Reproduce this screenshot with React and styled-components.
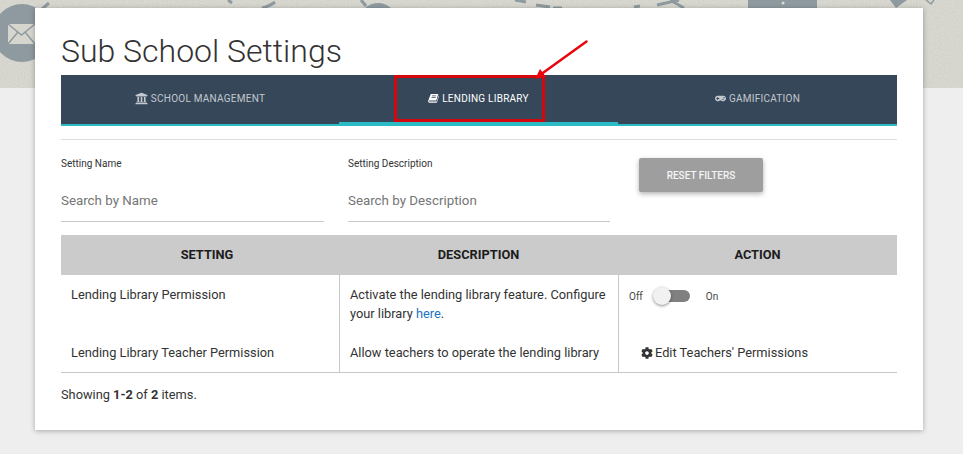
import React from "react";
import styled, { createGlobalStyle } from "styled-components";
import { FaUniversity, FaGamepad, FaCog } from "react-icons/fa";

const GlobalStyle = createGlobalStyle`
  html, body {
    margin: 0;
    padding: 0;
    background: #eeeeee;
    font-family: Roboto, "Liberation Sans", sans-serif;
    color: #333;
  }
  * { box-sizing: border-box; }
`;

const Page = styled.div`
  width: 963px;
  height: 454px;
  overflow: hidden;
`;

const Banner = styled.div`
  height: 88px;
  background: #dbdbd4;
  overflow: hidden;
  svg { display: block; }
`;

const Card = styled.main`
  position: relative;
  width: 888px;
  height: 422px;
  margin: -80px 0 0 35px;
  padding: 27px 26px 0;
  background: #fff;
  box-shadow: 0 1px 5px rgba(0, 0, 0, 0.3);
`;

const Title = styled.h1`
  margin: 0;
  height: 40px;
  font-size: 32px;
  line-height: 32px;
  font-weight: 300;
  color: #333;
`;

const Tabs = styled.nav`
  display: grid;
  grid-template-columns: 278px 279px 279px;
  height: 51px;
  background: #364759;
  border-bottom: 2px solid #2bbbc5;
`;

const Tab = styled.a`
  display: flex;
  align-items: center;
  justify-content: center;
  gap: 3px;
  height: 49px;
  padding-bottom: ${(p) => (p.$active ? "1px" : "3px")};
  font-size: 10px;
  font-weight: 400;
  letter-spacing: 0.25px;
  color: ${(p) => (p.$active ? "#fff" : "#c3c9cf")};
  border-bottom: ${(p) => (p.$active ? "2px solid #2bbbc5" : "0")};
  svg { font-size: ${(p) => p.$iconSize || 11}px; }
`;

const Divider = styled.hr`
  margin: 13px 0 0;
  border: 0;
  border-top: 1px solid #ddd;
`;

const Filters = styled.form`
  display: flex;
  height: 95px;
  padding-top: 18px;
`;

const Field = styled.label`
  display: block;
  width: ${(p) => p.$width}px;
  margin-right: ${(p) => p.$gap}px;
  height: 64px;
  border-bottom: 1px solid #c8c8c8;
`;

const FieldLabel = styled.span`
  display: block;
  font-size: 10px;
  line-height: 12px;
  color: #333;
`;

const FieldInput = styled.input`
  display: block;
  width: 100%;
  margin-top: 21px;
  padding: 0;
  border: 0;
  outline: 0;
  font: 400 13.33px/20px Roboto, sans-serif;
  color: #333;
  &::placeholder { color: #757575; opacity: 1; }
`;

const ResetButton = styled.button`
  width: 124px;
  height: 34px;
  margin-top: 0;
  border: 0;
  border-radius: 2px;
  background: #9e9e9e;
  color: #f5f5f5;
  font: 500 10px Roboto, sans-serif;
  box-shadow: 0 2px 5px rgba(0, 0, 0, 0.3);
`;

const Table = styled.div`
  display: grid;
  grid-template-columns: 278px 279px 279px;
  border-bottom: 1px solid #c8c8c8;
`;

const HeadCell = styled.div`
  height: 40px;
  display: flex;
  align-items: center;
  justify-content: center;
  padding-left: ${(p) => (p.$first ? "14px" : "0")};
  padding-bottom: 1px;
  background: #cbcbcb;
  font-size: 12.8px;
  font-weight: 700;
  color: #1c1c1c;
`;

const Cell = styled.div`
  padding: 10px 8px 10px 10px;
  font-size: 12.8px;
  line-height: 19px;
  color: #333;
  border-left: ${(p) => (p.$first ? "0" : "1px solid #c8c8c8")};
`;

const DocLink = styled.a`
  color: #1a73c7;
`;

const ToggleRow = styled.div`
  display: flex;
  align-items: center;
  height: 21px;
  padding-top: 1px;
  font-size: 10px;
  color: #444;
`;

const Track = styled.span`
  position: relative;
  display: block;
  width: 36px;
  height: 12px;
  margin: -1px 16px 0 11px;
  border-radius: 6px;
  background: #808080;
`;

const Thumb = styled.span`
  position: absolute;
  left: -1px;
  top: -3px;
  width: 18px;
  height: 18px;
  border-radius: 50%;
  background: #f1f1f1;
  box-shadow: 0 1px 3px rgba(0, 0, 0, 0.45);
`;

const EditAction = styled.a`
  display: flex;
  align-items: center;
  gap: 2px;
  padding-left: 12px;
  color: #333;
  svg { font-size: 12px; }
`;

const Summary = styled.p`
  margin: 13px 0 0;
  font-size: 12.8px;
  line-height: 18px;
  color: #333;
`;

const Callout = styled.div`
  position: absolute;
  left: 359px;
  top: 67px;
  width: 151px;
  height: 47px;
  border: 3px solid #d5060c;
`;

const Arrow = styled.svg`
  position: absolute;
  left: 495px;
  top: 30px;
`;

function BookIcon() {
  return (
    <svg width="11" height="10" viewBox="0 0 16 14" fill="currentColor">
      <path
        fillRule="evenodd"
        d="M4 1h11l-3 9.5H2.5c-.8 0-1.2.8-.9 1.2.2.3.6.5 1 .5h10.100l2.800-9 .5.8-2.900 9.300c-.1.4-.5.7-1 .7H2.500C1.200 14 .2 12.900.2 11.700c0-.3 0-.5.1-.8zM6 3.500h6l-.3 1H5.700zM5.200 6h6l-.3 1H4.900z"
      />
    </svg>
  );
}

function BannerArt() {
  return (
    <svg width="963" height="88" viewBox="0 0 963 88">
      <defs>
        <filter id="grain">
          <feTurbulence type="fractalNoise" baseFrequency="0.9" numOctaves="2" seed="4" />
          <feColorMatrix values="0 0 0 0 0.45  0 0 0 0 0.45  0 0 0 0 0.4  0 0 0 0.5 -0.12" />
        </filter>
      </defs>
      <rect width="963" height="88" filter="url(#grain)" />
      <circle cx="22" cy="33" r="29" fill="#8e9a9f" />
      <path d="M8 24h27v20H8z" fill="#d6d6cf" />
      <path d="M8 24l13.500 11L35 24M8 44l10-12M35 44L25 32" fill="none" stroke="#8e9a9f" strokeWidth="1.500" />
      <g fill="none" stroke="#8e9a9f" strokeWidth="3">
        <path d="M42 9l7-6M228 0l4 3M262 8q8-2 13-6" />
        <path d="M361 0l5 6M515 0l11 2M536 5l14 2M553 8l9 0M634 7l6-1" />
        <path d="M657 5l22-5M670 0l14 8" />
      </g>
      <circle cx="378" cy="22" r="19" fill="#8e9a9f" />
      <path d="M748 8V0h69v8z" fill="#8e9a9f" />
      <circle cx="783" cy="3" r="1.500" fill="#dbdbd4" />
      <path d="M890 0h17l-11 8z" fill="#8e9a9f" />
      <path d="M926 0l5 4 3-4" fill="none" stroke="#8e9a9f" strokeWidth="1.500" />
    </svg>
  );
}

export default function App() {
  return (
    <Page>
      <GlobalStyle />
      <Banner>
        <BannerArt />
      </Banner>
      <Card>
        <Title>Sub School Settings</Title>
        <Tabs>
          <Tab $iconSize={13}>
            <FaUniversity /> SCHOOL MANAGEMENT
          </Tab>
          <Tab $active>
            <BookIcon /> LENDING LIBRARY
          </Tab>
          <Tab>
            <FaGamepad /> GAMIFICATION
          </Tab>
        </Tabs>
        <Divider />
        <Filters>
          <Field $width={263} $gap={24}>
            <FieldLabel>Setting Name</FieldLabel>
            <FieldInput placeholder="Search by Name" />
          </Field>
          <Field $width={262} $gap={29}>
            <FieldLabel>Setting Description</FieldLabel>
            <FieldInput placeholder="Search by Description" />
          </Field>
          <ResetButton type="button">RESET FILTERS</ResetButton>
        </Filters>
        <Table>
          <HeadCell $first>SETTING</HeadCell>
          <HeadCell>DESCRIPTION</HeadCell>
          <HeadCell>ACTION</HeadCell>
          <Cell $first>Lending Library Permission</Cell>
          <Cell>
            Activate the lending library feature. Configure your library <DocLink>here</DocLink>.
          </Cell>
          <Cell>
            <ToggleRow>
              Off
              <Track>
                <Thumb />
              </Track>
              On
            </ToggleRow>
          </Cell>
          <Cell $first>Lending Library Teacher Permission</Cell>
          <Cell>Allow teachers to operate the lending library</Cell>
          <Cell>
            <EditAction>
              <FaCog /> Edit Teachers' Permissions
            </EditAction>
          </Cell>
        </Table>
        <Summary>
          Showing <b>1-2</b> of <b>2</b> items.
        </Summary>
        <Callout />
        <Arrow width="60" height="50" viewBox="0 0 60 50">
          <path d="M56.500 3.500L10 37" stroke="#e8060c" strokeWidth="2.500" strokeLinecap="round" fill="none" />
          <path d="M5 41l5-10 6 8z" fill="#e8060c" />
        </Arrow>
      </Card>
    </Page>
  );
}
